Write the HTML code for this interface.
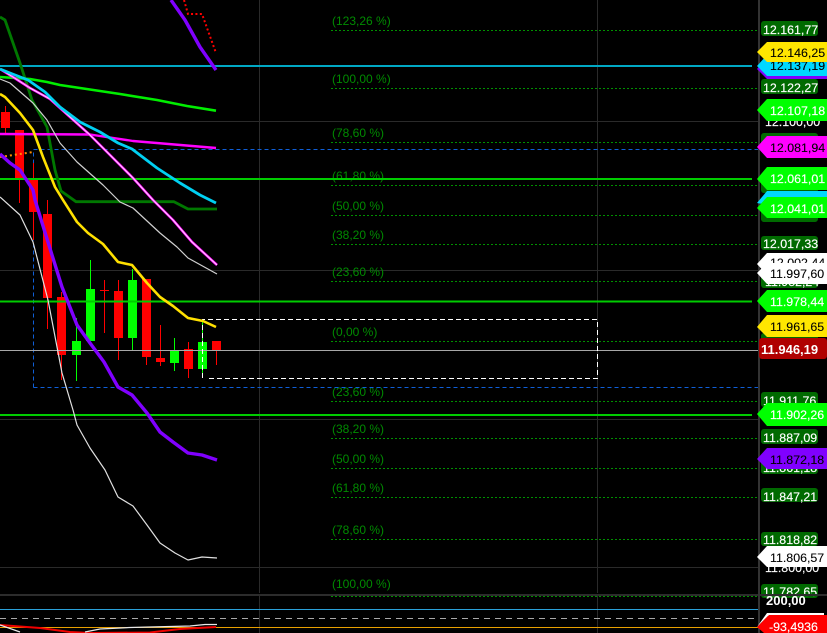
<!DOCTYPE html>
<html>
<head>
<meta charset="utf-8">
<style>
html,body{margin:0;padding:0;background:#000;width:827px;height:633px;overflow:hidden}
svg{display:block;position:absolute;left:0;top:0}
text{font-family:"Liberation Sans",sans-serif}
.f{font-size:12px;fill:#008a00}
.a{font-size:12.4px;fill:#fff;stroke:#fff;stroke-width:.15}
.k{font-size:12.4px;fill:#000;stroke:#000;stroke-width:.1}
.fl{stroke:#009000;stroke-width:1;stroke-dasharray:2 2;fill:none}
.g{fill:#006a00}
.l{fill:none;stroke-linejoin:round;stroke-linecap:butt}
</style>
</head>
<body>
<svg width="827" height="633" viewBox="0 0 827 633" xmlns="http://www.w3.org/2000/svg">
<rect width="827" height="633" fill="#000"/>
<!-- grid -->
<g stroke="#2a2a2a" stroke-width="1" fill="none">
<path d="M259.5 0V593M259.5 596V633M597.5 0V593M597.5 596V633"/>
<path d="M0 121.5H759M0 270.5H759M0 419.5H759M0 567.5H759"/>
</g>
<!-- fib levels -->
<g class="fl">
<path d="M331 30.5H758M331 88.5H758M331 142.5H758M331 185.5H758M331 215.5H758M331 244.5H758M331 281.5H758M331 341.5H758M331 401.5H758M331 438.5H758M331 468.5H758M331 497.5H758M331 539.5H758M331 596.5H758"/>
</g>
<g class="f">
<text x="332" y="25">(123,26 %)</text>
<text x="332" y="83">(100,00 %)</text>
<text x="332" y="137">(78,60 %)</text>
<text x="332" y="180">(61,80 %)</text>
<text x="332" y="210">(50,00 %)</text>
<text x="332" y="239">(38,20 %)</text>
<text x="332" y="276">(23,60 %)</text>
<text x="332" y="336">(0,00 %)</text>
<text x="332" y="396">(23,60 %)</text>
<text x="332" y="433">(38,20 %)</text>
<text x="332" y="463">(50,00 %)</text>
<text x="332" y="492">(61,80 %)</text>
<text x="332" y="534">(78,60 %)</text>
<text x="332" y="588">(100,00 %)</text>
</g>
<!-- blue dashed -->
<path d="M33.5 387.5V149.5H759M33.5 387.5H759" fill="none" stroke="#0f5fd8" stroke-width="1" stroke-dasharray="4 3"/>
<!-- wicks -->
<g stroke="#ff0000" stroke-width="1" fill="none">
<path d="M5.5 106V133M19.5 130V203M33.5 163V240M47.5 200V329M61.5 292V380M104.5 280V333M118.5 280V360M146.5 279V365M160.5 325V366M188.5 342V378M216.5 350V365"/>
</g>
<g stroke="#00ff00" stroke-width="1" fill="none">
<path d="M76.5 318V381M90.5 260V341M132.5 269V350M174.5 338V371M202.5 320V378"/>
</g>
<!-- bodies -->
<g fill="#ff0000">
<rect x="1" y="112" width="9" height="16"/>
<rect x="15" y="130" width="9" height="48"/>
<rect x="29" y="180" width="9" height="32"/>
<rect x="43" y="214" width="9" height="84"/>
<rect x="57" y="297" width="9" height="58"/>
<rect x="100" y="290" width="9" height="1"/>
<rect x="114" y="291" width="9" height="47"/>
<rect x="142" y="279" width="9" height="78"/>
<rect x="156" y="358" width="9" height="4"/>
<rect x="184" y="349" width="9" height="20"/>
<rect x="212" y="341" width="9" height="9"/>
</g>
<g fill="#00ff00">
<rect x="72" y="341" width="9" height="14"/>
<rect x="86" y="289" width="9" height="52"/>
<rect x="128" y="280" width="9" height="58"/>
<rect x="170" y="351" width="9" height="12"/>
<rect x="198" y="342" width="9" height="27"/>
</g>
<!-- horizontal lines -->
<path d="M0 350.5H759" stroke="#a8a8a8" stroke-width="1" fill="none"/>
<g stroke="#00cc00" stroke-width="2" fill="none">
<path d="M0 179H752M0 301.5H752M0 415H752"/>
</g>
<path d="M0 66H752" stroke="#00a8c4" stroke-width="2" fill="none"/>
<!-- white dashed rect -->
<path d="M202.5 378V319.5H597.5V378.5H206" fill="none" stroke="#fff" stroke-width="1" stroke-dasharray="5 3"/>
<!-- orange dotted -->
<path d="M0 157L33 152" fill="none" stroke="#ff8c00" stroke-width="2" stroke-dasharray="2 3"/>
<!-- dark green -->
<path class="l" stroke="#007800" stroke-width="2.8" d="M0 17L5 20L20 63L32 100L47 127L55 170L61 191L76 201.7L174 201.7L188 209L217 209"/>
<!-- green MA -->
<path class="l" stroke="#00ee00" stroke-width="2.6" d="M0 77L30 79L47 82L60 85L120 94L157 100L187 106L216 110.7"/>
<!-- magenta -->
<path class="l" stroke="#ff00ff" stroke-width="2.4" d="M0 134L90 134.5L133 141L216 148"/>
<!-- white upper -->
<path class="l" stroke="#d0d0d0" stroke-width="1.2" d="M0 79L10 83L33 103L47 120L60 143L77 162L103 185L120 202L133 208L160 233L177 247L188 258L217 274"/>
<!-- pink -->
<path class="l" stroke="#ff00ff" stroke-width="2.6" d="M0 69L13 77L30 88L50 99L70 117L90 135L110 155L133 178L153 200L173 220L192 242L217 265"/>
<path class="l" stroke="#ffe0ff" stroke-width="1" d="M0 69L13 77L30 88L50 99L70 117L90 135L110 155L133 178L153 200L173 220L192 242L217 265"/>
<!-- cyan -->
<path class="l" stroke="#00d0f2" stroke-width="2.8" d="M0 69L10 73L28 80L45 92L60 107L80 122L100 132L118 143L132 149L157 168L180 183L200 195L216 203"/>
<!-- yellow -->
<path class="l" stroke="#ffe000" stroke-width="2.6" d="M0 94L5 97L20 113L33 130L43 157L55 187L63 200L77 222L88 233L103 244L118 262L132 265L147 283L160 297L173 306L188 318L203 321L216 327"/>
<!-- white lower -->
<path class="l" stroke="#e0e0e0" stroke-width="1.2" d="M0 197L20 215L33 242L48 300L62 373L73 410L77 425L90 448L105 470L118 497L133 506L147 525L160 543L175 553L188 560L202 557L217 558"/>
<!-- purple -->
<path class="l" stroke="#8000ff" stroke-width="3.4" d="M0 154L10 163L20 170L33 190L35 200L52 255L62 287L77 325L90 343L104 362L118 387L132 395L147 413L160 432L173 442L188 453L202 455L217 460"/>
<path class="l" stroke="#8000ff" stroke-width="3.4" d="M171 0L185 20L200 47L216 70"/>
<!-- red dotted -->
<path d="M184 0L188 14L202 14L216 53" fill="none" stroke="#ff0000" stroke-width="2" stroke-dasharray="2 2.4"/>
<!-- lower pane -->
<path d="M0 609.5H759" stroke="#2aa0d8" stroke-width="1" fill="none"/>
<path d="M0 618.5H759" stroke="#a8a8a8" stroke-width="1" stroke-dasharray="6 5" fill="none"/>
<path d="M0 627.5H759" stroke="#e8a000" stroke-width="1" fill="none"/>
<path class="l" stroke="#f00000" stroke-width="2" d="M0 625L40 628L70 632L90 633L150 632.5L180 629L216 627"/>
<path class="l" stroke="#e8e8e8" stroke-width="1.2" d="M0 625L20 632M85 632L100 629L130 627.5L190 626L205 624.5L217 624.5"/>
<!-- pane sep & axis -->
<path d="M0 595H827" stroke="#2c2c2c" stroke-width="2" fill="none"/>
<path d="M759 0V633" stroke="#333" stroke-width="2" fill="none"/>
<!-- axis labels base -->
<text class="a" x="765" y="126">12.100,00</text>
<text class="a" x="765" y="572">11.800,00</text>
<g>
<rect class="g" x="761" y="21" width="57" height="15" rx="3"/><text class="a" x="763" y="34">12.161,77</text>
<rect class="g" x="761" y="79" width="57" height="15" rx="3"/><text class="a" x="763" y="92">12.122,27</text>
<rect class="g" x="761" y="133" width="57" height="15" rx="3"/>
<rect class="g" x="761" y="178" width="57" height="15" rx="3"/>
<rect class="g" x="761" y="207" width="57" height="15" rx="3"/>
<rect class="g" x="761" y="236" width="57" height="14" rx="3"/><text class="a" x="763" y="248">12.017,33</text>
<rect class="g" x="761" y="273" width="57" height="15" rx="3"/><text class="a" x="765" y="286">11.982,24</text>
<rect class="g" x="761" y="333" width="57" height="15" rx="3"/>
<rect class="g" x="761" y="392" width="57" height="15" rx="3"/><text class="a" x="763" y="405">11.911,76</text>
<rect class="g" x="761" y="429" width="57" height="15" rx="3"/><text class="a" x="763" y="442">11.887,09</text>
<rect class="g" x="761" y="460" width="57" height="14" rx="3"/><text class="a" x="763" y="472">11.861,18</text>
<rect class="g" x="761" y="488" width="57" height="14" rx="3"/><text class="a" x="763" y="501">11.847,21</text>
<rect class="g" x="761" y="532" width="57" height="14" rx="3"/><text class="a" x="763" y="544">11.818,82</text>
<rect class="g" x="761" y="584" width="57" height="14" rx="3"/><text class="a" x="763" y="596">11.782,65</text>
</g>
<rect x="758" y="598" width="69" height="35" fill="#000"/>
<path d="M0 595H827" stroke="#2c2c2c" stroke-width="2" fill="none"/>
<path d="M759 0V633" stroke="#333" stroke-width="2" fill="none"/>
<path d="M740 609.5H759M740 627.5H759" stroke="none" fill="none"/>
<!-- arrows -->
<polygon points="757,69 767,58 827,58 827,79 767,79" fill="#8000ff"/>
<polygon points="757,66 767,55 827,55 827,76 767,76" fill="#00d8ff"/>
<text class="k" x="770" y="70">12.137,19</text>
<polygon points="757,52 767,42 827,42 827,62 767,62" fill="#ffe600"/>
<text class="k" x="770" y="57">12.146,25</text>
<polygon points="757,110 767,99 827,99 827,121 767,121" fill="#00ff00"/>
<text class="a" x="770" y="115">12.107,18</text>
<polygon points="757,147 767,136 827,136 827,158 767,158" fill="#ff00ff"/>
<text class="k" x="770" y="152">12.081,94</text>
<polygon points="757,179 767,167 827,167 827,190 767,190" fill="#00ff00"/>
<text class="a" x="770" y="183">12.061,01</text>
<polygon points="757,203 767,191 827,191 827,205 767,205" fill="#00d8ff"/>
<polygon points="757,208 767,197 827,197 827,218 767,218" fill="#00ff00"/>
<text class="a" x="770" y="213">12.041,01</text>
<polygon points="757,264 767,253 827,253 827,275 767,275" fill="#fff"/>
<text class="k" x="770" y="267">12.002,44</text>
<polygon points="757,273 767,263 827,263 827,284 767,284" fill="#fff"/>
<text class="k" x="770" y="278">11.997,60</text>
<polygon points="757,301 767,290 827,290 827,312 767,312" fill="#00ff00"/>
<text class="a" x="770" y="306">11.978,44</text>
<polygon points="757,327 767,315 827,315 827,337 767,337" fill="#ffe600"/>
<text class="k" x="770" y="331">11.961,65</text>
<rect x="759" y="338" width="68" height="21" rx="3" fill="#b00000"/>
<text x="761" y="354" font-size="13" font-weight="bold" fill="#fff">11.946,19</text>
<polygon points="757,414 767,403 827,403 827,426 767,426" fill="#00ff00"/>
<text class="a" x="770" y="419">11.902,26</text>
<polygon points="757,459 767,448 827,448 827,469 767,469" fill="#8000ff"/>
<text class="k" x="770" y="464">11.872,18</text>
<polygon points="757,557 767,546 827,546 827,567 767,567" fill="#fff"/>
<text class="k" x="770" y="562">11.806,57</text>
<!-- bottom pane labels -->
<text x="766" y="605" font-size="13" font-weight="bold" fill="#fff">200,00</text>
<polygon points="757,627 767,613 824,613 824,616 768,616" fill="#fff"/>
<polygon points="757,627 769,615 827,615 827,633 764,633" fill="#ff0000"/>
<text class="a" x="769" y="631">-93,4936</text>
</svg>
</body>
</html>
